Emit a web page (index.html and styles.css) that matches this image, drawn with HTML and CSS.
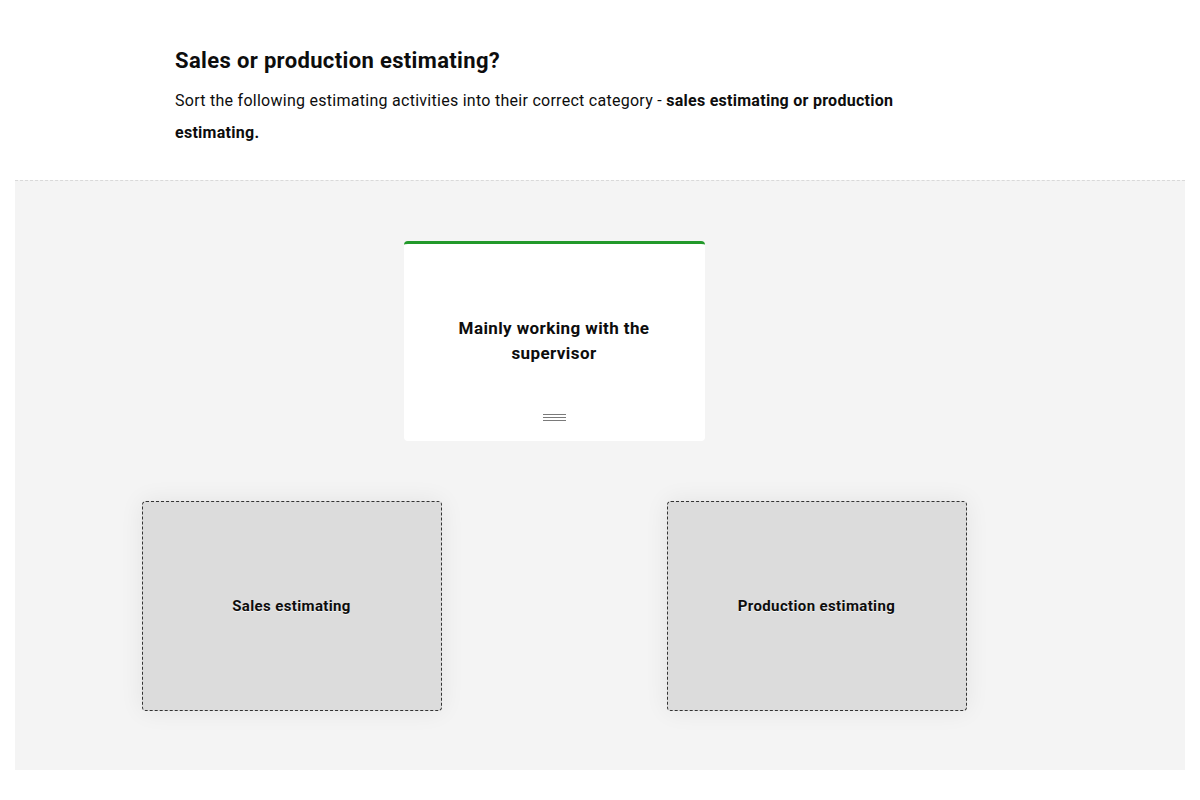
FILE: index.html
```html
<!DOCTYPE html>
<html lang="en">
<head>
<meta charset="utf-8">
<title>Sales or production estimating?</title>
<link rel="stylesheet" href="styles.css">
</head>
<body>
  <header class="intro">
    <h1 class="intro-title">Sales or production estimating?</h1>
    <p class="intro-text">Sort the following estimating activities into their correct category - <strong>sales estimating or production estimating.</strong></p>
  </header>

  <section class="sorter">
    <div class="sorter-inner">
      <div class="deck">
        <div class="card">
          <p class="card-text">Mainly working with the supervisor</p>
          <span class="card-handle" aria-hidden="true">
            <svg width="23" height="8" viewBox="0 0 23 8">
              <path d="M0 0.5H23M0 3.5H23M0 6.5H23" stroke="#7a7a7a" stroke-width="1"/>
            </svg>
          </span>
        </div>
      </div>
      <div class="zones">
        <div class="zone-cell"><div class="zone"><span class="zone-label">Sales estimating</span></div></div>
        <div class="zone-cell"><div class="zone"><span class="zone-label">Production estimating</span></div></div>
      </div>
    </div>
  </section>
</body>
</html>
```

FILE: styles.css
```css
* {
  box-sizing: border-box;
}

body {
  margin: 0;
  background: #ffffff;
  color: #0d0d0d;
  font-family: Roboto, "Liberation Sans", sans-serif;
}

.intro {
  padding: 45px 0 0 175px;
  height: 180px;
}

.intro-title {
  margin: 0;
  font-size: 22px;
  line-height: 32px;
  font-weight: 700;
  letter-spacing: 0.35px;
}

.intro-text {
  margin: 8px 0 0;
  max-width: 780px;
  font-size: 16px;
  line-height: 32px;
  font-weight: 400;
  letter-spacing: 0.27px;
}

.intro-text strong {
  font-weight: 700;
}

.sorter {
  margin: 0 15px;
  height: 590px;
  background: #f4f4f4;
  border-top: 1px dashed #d9d9d9;
  padding: 60px 14px 0;
}

.sorter-inner {
  width: 1050px;
}

.deck {
  display: flex;
  justify-content: center;
}

.card {
  width: 301px;
  height: 200px;
  background: #ffffff;
  border-top: 3px solid #22992a;
  border-radius: 4px;
  display: flex;
  flex-direction: column;
  align-items: center;
  padding: 72px 30px 0;
}

.card-text {
  margin: 0;
  text-align: center;
  font-size: 17px;
  line-height: 25px;
  font-weight: 700;
  letter-spacing: 0.4px;
  flex: 1;
}

.card-handle {
  display: block;
  height: 8px;
  margin-bottom: 19px;
}

.card-handle svg {
  display: block;
}

.zones {
  display: grid;
  grid-template-columns: 1fr 1fr;
  margin-top: 60px;
}

.zone-cell {
  display: flex;
  justify-content: center;
}

.zone {
  width: 300px;
  height: 210px;
  background: #dcdcdc;
  border: 1px dashed #333333;
  border-radius: 4px;
  box-shadow: 0 0 24px rgba(0, 0, 0, 0.07);
  display: flex;
  align-items: center;
  justify-content: center;
}

.zone-label {
  font-size: 15px;
  font-weight: 700;
  letter-spacing: 0.37px;
  text-shadow: 0 1px 0 rgba(255, 255, 255, 0.7);
}
```
